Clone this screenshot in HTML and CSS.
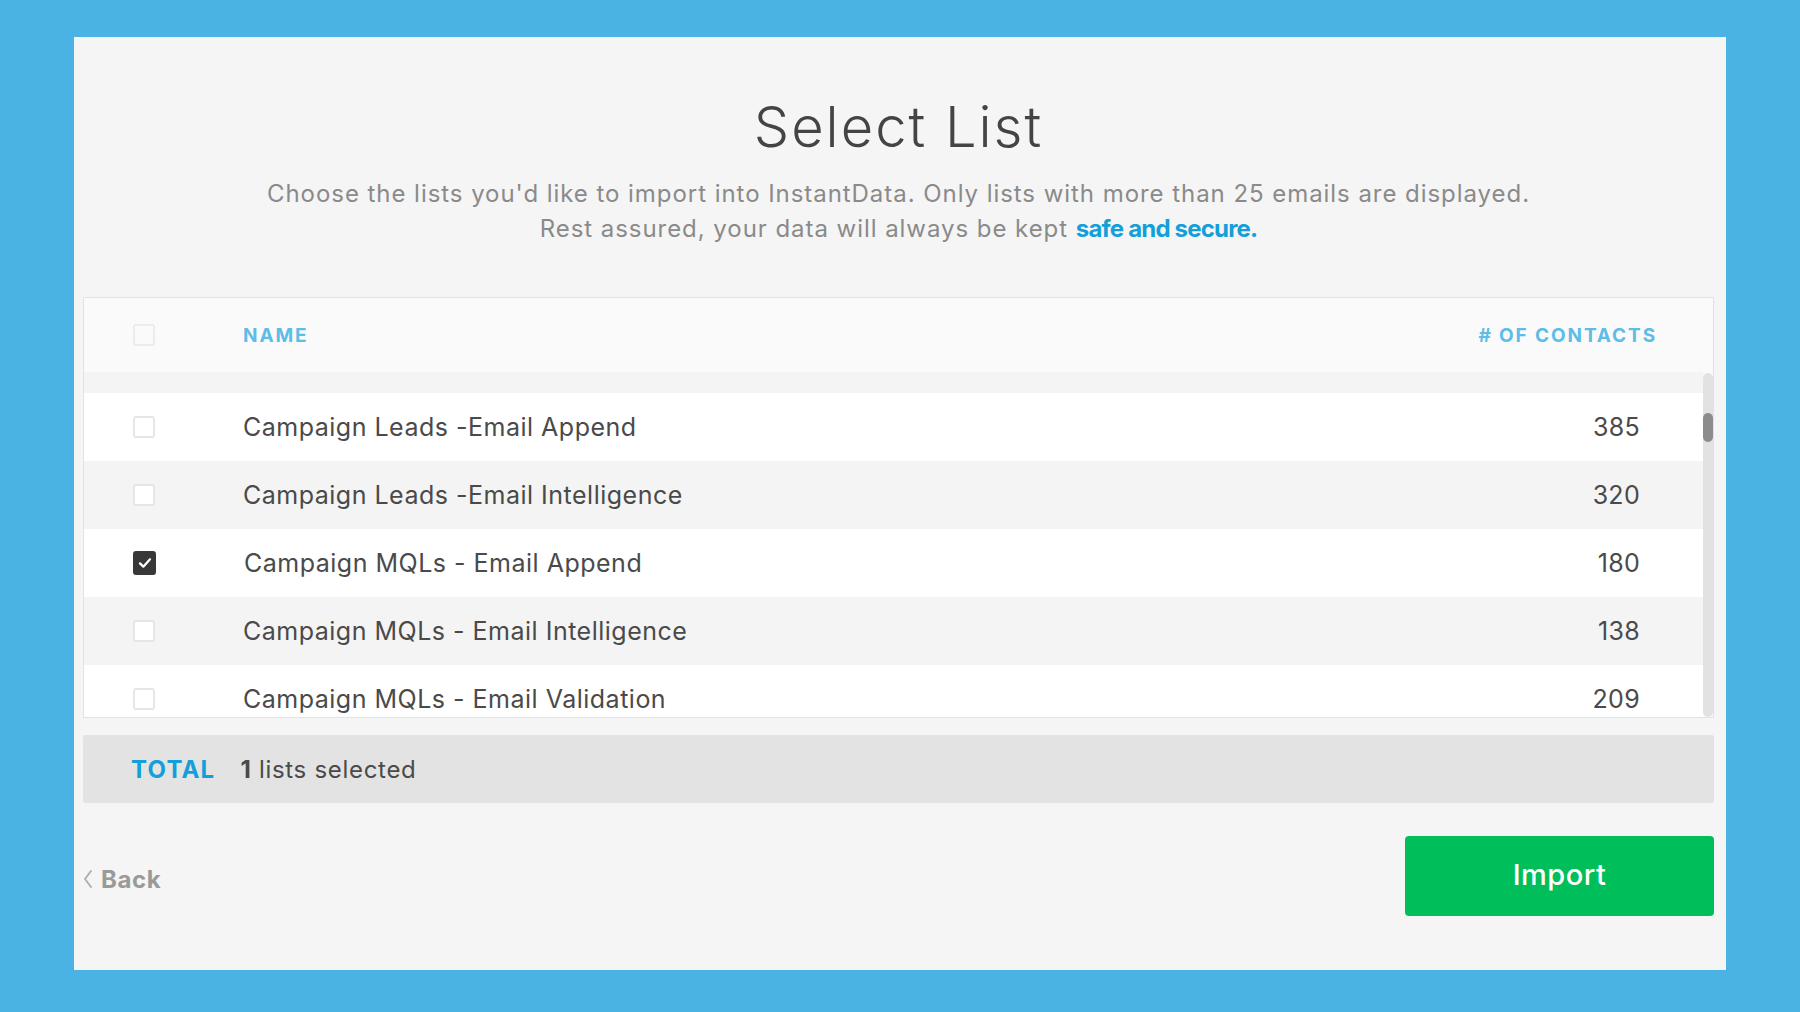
FILE: index.html
```html
<!DOCTYPE html>
<html lang="en">
<head>
<meta charset="utf-8">
<title>Select List</title>
<link rel="stylesheet" href="styles.css">
</head>
<body>
<main class="panel">
  <header class="intro">
    <h1 class="title">Select List</h1>
    <p class="subtitle">Choose the lists you'd like to import into InstantData. Only lists with more than 25 emails are displayed.<br>Rest assured, your data will always be kept <a class="link" href="#">safe and secure.</a></p>
  </header>

  <section class="table">
    <div class="thead">
      <span class="check"></span>
      <span class="th-name">NAME</span>
      <span class="th-count"># OF CONTACTS</span>
    </div>
    <div class="scroll">
      <div class="rows">
        <div class="spacer"></div>
        <div class="row">
          <span class="check"></span>
          <span class="name">Campaign Leads -Email Append</span>
          <span class="count">385</span>
        </div>
        <div class="row alt">
          <span class="check"></span>
          <span class="name">Campaign Leads -Email Intelligence</span>
          <span class="count">320</span>
        </div>
        <div class="row">
          <span class="check checked"><svg viewBox="0 0 24 24" width="16" height="16"><path d="M4.5 12.5l5 5 10-11" fill="none" stroke="#fff" stroke-width="3.4" stroke-linecap="round" stroke-linejoin="round"/></svg></span>
          <span class="name">Campaign MQLs - Email Append</span>
          <span class="count">180</span>
        </div>
        <div class="row alt">
          <span class="check"></span>
          <span class="name">Campaign MQLs - Email Intelligence</span>
          <span class="count">138</span>
        </div>
        <div class="row">
          <span class="check"></span>
          <span class="name">Campaign MQLs - Email Validation</span>
          <span class="count">209</span>
        </div>
      </div>
      <div class="track"><div class="thumb"></div></div>
    </div>
  </section>

  <section class="total">
    <span class="total-label">TOTAL</span>
    <span class="total-text"><b>1</b> lists selected</span>
  </section>

  <footer class="actions">
    <a class="back" href="#"><svg class="chev" viewBox="0 0 10 20" width="10" height="20"><polyline points="8,2 2,10 8,18" fill="none" stroke="#b0b0b0" stroke-width="2" stroke-linecap="round" stroke-linejoin="round"/></svg><span>Back</span></a>
    <button class="import" type="button">Import</button>
  </footer>
</main>
</body>
</html>
```

FILE: styles.css
```css
* { box-sizing: border-box; }

html, body {
  margin: 0;
  padding: 0;
}

body {
  background: #4ab3e4;
  font-family: Inter, Lato, "Liberation Sans", sans-serif;
  height: 1012px;
  overflow: hidden;
}

.panel {
  margin: 37px 74px 0 74px;
  width: 1652px;
  height: 933px;
  background: #f5f5f5;
  padding: 58px 12px 0 9px;
  display: flex;
  flex-direction: column;
}

.intro {
  text-align: center;
}

.title {
  margin: 0;
  font-size: 56px;
  line-height: 64px;
  font-weight: 300;
  color: #444;
  letter-spacing: 2px;
}

.subtitle {
  margin: 17px 0 0 0;
  font-size: 24px;
  line-height: 35px;
  color: #8a8a8a;
  letter-spacing: 0.95px;
}

.link {
  color: #139fd9;
  font-weight: 700;
  text-decoration: none;
  letter-spacing: -0.8px;
}

.table {
  margin-top: 51px;
  border: 1px solid #e2e2e2;
  background: #fafafa;
}

.thead {
  height: 74px;
  display: flex;
  align-items: center;
  padding: 0 56px 0 49px;
  background: #fafafa;
}

.th-name {
  margin-left: 88px;
  flex: 1;
  color: #5cbde7;
  font-weight: 700;
  font-size: 19px;
  letter-spacing: 1.9px;
}

.th-count {
  color: #5cbde7;
  font-weight: 700;
  font-size: 19px;
  letter-spacing: 1.9px;
}

.check {
  width: 22px;
  height: 22px;
  flex: none;
  border: 2px solid #e6e6e6;
  border-radius: 3px;
  background: #fff;
  display: flex;
  align-items: center;
  justify-content: center;
}

.thead .check {
  background: #fafafa;
  border-color: #ececec;
}

.check.checked {
  background: #383838;
  border-color: #383838;
  width: 23px;
  height: 24px;
}

.scroll {
  height: 345px;
  overflow: hidden;
  display: flex;
}

.rows {
  flex: 1;
  min-width: 0;
}

.spacer {
  height: 21px;
  background: #f4f4f4;
}

.row {
  height: 68px;
  display: flex;
  align-items: center;
  padding: 0 63px 0 49px;
  background: #fff;
  color: #4a4a4a;
  font-size: 25px;
  letter-spacing: 0.5px;
}

.row.alt {
  background: #f4f4f4;
}

.name {
  margin-left: 88px;
  flex: 1;
}

.count {
  text-align: right;
  letter-spacing: 0.3px;
}

.track {
  width: 10px;
  flex: none;
  margin-top: 1px;
  background: #e2e2e2;
  border-radius: 5px;
  position: relative;
}

.thumb {
  position: absolute;
  left: 0;
  top: 40px;
  width: 10px;
  height: 29px;
  border-radius: 5px;
  background: #8c8c8c;
}

.total {
  margin-top: 17px;
  height: 68px;
  background: #e3e3e3;
  border-radius: 2px;
  display: flex;
  align-items: center;
  padding-left: 48px;
}

.total-label {
  color: #139fd9;
  font-weight: 700;
  font-size: 24px;
  letter-spacing: 1.2px;
}

.total-text {
  margin-left: 25px;
  color: #4a4a4a;
  font-size: 24px;
  letter-spacing: 0.7px;
}

.total-text b {
  font-weight: 700;
}

.actions {
  margin-top: 33px;
  display: flex;
  align-items: center;
  justify-content: space-between;
}

.back {
  display: flex;
  align-items: center;
  gap: 8px;
  color: #9a9a9a;
  font-weight: 700;
  font-size: 24px;
  letter-spacing: 0.6px;
  text-decoration: none;
  padding-top: 6px;
}

.chev {
  display: block;
}

.import {
  width: 309px;
  height: 80px;
  border: none;
  border-radius: 4px;
  background: #00bf5a;
  color: #fff;
  font-family: Inter, Lato, "Liberation Sans", sans-serif;
  font-size: 29px;
  font-weight: 500;
  letter-spacing: 0.5px;
  padding-bottom: 4px;
}
```
